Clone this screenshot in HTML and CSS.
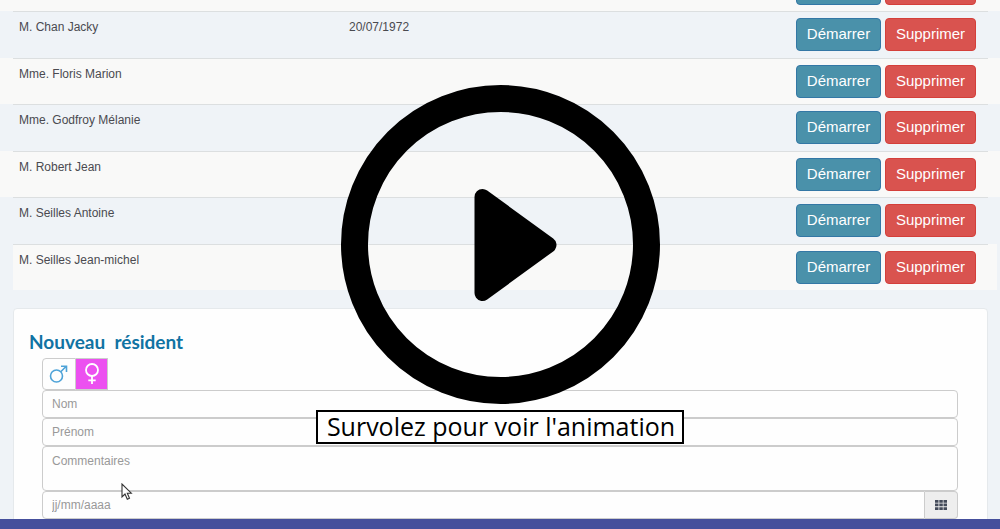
FILE: index.html
```html
<!DOCTYPE html>
<html lang="fr">
<head>
<meta charset="utf-8">
<meta name="viewport" content="width=device-width, initial-scale=1">
<title>Résidents</title>
<link rel="stylesheet" href="styles.css">
</head>
<body>
<main class="page">
  <table class="residents">
    <tbody>
      <tr><td class="name"></td><td class="birth"></td><td class="actions"><button class="btn start" aria-label="Démarrer"></button><button class="btn delete" aria-label="Supprimer"></button></td></tr>
      <tr><td class="name">M. Chan Jacky</td><td class="birth">20/07/1972</td><td class="actions"><button class="btn start">Démarrer</button><button class="btn delete">Supprimer</button></td></tr>
      <tr><td class="name">Mme. Floris Marion</td><td class="birth"></td><td class="actions"><button class="btn start">Démarrer</button><button class="btn delete">Supprimer</button></td></tr>
      <tr><td class="name">Mme. Godfroy Mélanie</td><td class="birth"></td><td class="actions"><button class="btn start">Démarrer</button><button class="btn delete">Supprimer</button></td></tr>
      <tr><td class="name">M. Robert Jean</td><td class="birth"></td><td class="actions"><button class="btn start">Démarrer</button><button class="btn delete">Supprimer</button></td></tr>
      <tr><td class="name">M. Seilles Antoine</td><td class="birth"></td><td class="actions"><button class="btn start">Démarrer</button><button class="btn delete">Supprimer</button></td></tr>
      <tr><td class="name">M. Seilles Jean-michel</td><td class="birth"></td><td class="actions"><button class="btn start">Démarrer</button><button class="btn delete">Supprimer</button></td></tr>
    </tbody>
  </table>

  <section class="panel">
    <h2 class="title">Nouveau&nbsp; résident</h2>
    <form class="form">
      <div class="gender">
        <button type="button" class="sex male" aria-label="Homme">
          <svg width="20" height="20" viewBox="0 0 20 20" fill="none" stroke="currentColor" stroke-width="1.6"><circle cx="7.500" cy="12" r="6"/><path d="M11.800 7.700 17.200 2.300M12 2.300H17.500V8"/></svg>
        </button>
        <button type="button" class="sex female" aria-label="Femme">
          <svg width="20" height="22" viewBox="0 0 20 22" fill="none" stroke="currentColor" stroke-width="1.8"><circle cx="10" cy="7" r="6"/><path d="M10 13v8M6.300 17.300h7.400"/></svg>
        </button>
      </div>
      <input class="field" type="text" placeholder="Nom" aria-label="Nom">
      <input class="field" type="text" placeholder="Prénom" aria-label="Prénom">
      <textarea class="field notes" placeholder="Commentaires" aria-label="Commentaires"></textarea>
      <div class="date">
        <input class="field" type="text" placeholder="jj/mm/aaaa" aria-label="Date de naissance">
        <button type="button" class="pick" aria-label="Calendrier">
          <svg width="12" height="10" viewBox="0 0 12 10" fill="currentColor"><path d="M0 0h3.500v2.700H0zM4.300 0h3.500v2.700h-3.500zM8.500 0H12v2.700H8.500zM0 3.600h3.500v2.700H0zM4.300 3.600h3.500v2.700h-3.500zM8.500 3.600H12v2.700H8.500zM0 7.200h3.500v2.700H0zM4.300 7.200h3.500v2.700h-3.500zM8.500 7.200H12v2.700H8.500z"/></svg>
        </button>
      </div>
    </form>
  </section>
  <svg class="cursor" width="12" height="18" viewBox="0 0 12 18"><path d="M1 1v13l3-3 2.300 5.300 2.200-1L6.300 10.200H10.300z" fill="#fff" stroke="#333" stroke-width="1.100"/></svg>
</main>
<footer class="bar"></footer>
<div class="overlay">
  <svg class="play" width="320" height="320" viewBox="0 0 320 320"><circle cx="160.500" cy="159.500" r="146" fill="none" stroke="#000" stroke-width="27"/><path d="M142.500 112 208.500 160 142.500 208z" stroke="#000" stroke-width="16" stroke-linejoin="round"/></svg>
  <p class="hint">Survolez pour voir l'animation</p>
</div>
</body>
</html>
```

FILE: styles.css
```css
* { box-sizing: border-box; }

body {
  margin: 0;
  height: 100vh;
  display: flex;
  flex-direction: column;
  overflow: hidden;
  position: relative;
  background: #eff3f7;
  color: #4a4a50;
  font: 12px/16px "Liberation Sans", Arial, sans-serif;
}

.page {
  flex: 1;
  min-height: 0;
  overflow: hidden;
  padding: 0 12px 0 13px;
}

/* The list is scrolled: only the foot of its first row shows. */
.residents {
  width: 100%;
  margin-top: -35px;
  border-collapse: separate;
  border-spacing: 0;
  table-layout: fixed;
}

.residents td {
  border-top: 1px solid #dcdfe0;
  padding: 7px 6px 6px;
  vertical-align: top;
}

/* Light stripes bleed to the edges of the page. */
.residents tr:nth-child(odd) {
  background: #f9f9f8;
  box-shadow: -13px 0 #f9f9f8, 12px 0 #f9f9f8;
}
.residents tr:last-child { box-shadow: 9px 0 #f9f9f8; }

.name { width: 330px; }
.residents .actions {
  display: flex;
  justify-content: flex-end;
  gap: 4px;
  padding: 6px 12px 7px 0;
}
.residents tr:nth-child(odd) .actions { padding-bottom: 6px; }

.btn {
  width: 91px;
  height: 33px;
  padding: 0 0 1px;
  border: 1px solid;
  border-radius: 4px;
  color: #fff;
  font: 15px/20px "Liberation Sans", Arial, sans-serif;
}

.start { width: 85px; background: #4a91aa; border-color: #3377a5; }
.delete { background: #d9534f; border-color: #d43f3a; }

.panel {
  margin-top: 18px;
  padding: 21px 29px 0 28px;
  min-height: 260px;
  background: #fefefe;
  border: 1px solid #e5e9ec;
  border-radius: 4px;
}

.title {
  margin: 0 0 4px -13px;
  color: #1073a3;
  font: 700 19px/24px Lato, sans-serif;
}

.form { display: flex; flex-direction: column; }
.gender { display: flex; height: 32px; }

.sex {
  display: grid;
  place-items: center;
  width: 34px;
  padding: 0;
  border: 1px solid #ccc;
  background: #fefefe;
}

.male { color: #4ea3d8; border-radius: 4px 0 0 4px; }
.female { width: 32px; background: #ec50f0; color: #fff; border-left: 0; }

.field {
  display: block;
  width: 100%;
  height: 28px;
  margin: 0;
  padding: 4px 9px;
  border: 1px solid #ccc;
  border-radius: 4px;
  background: #fefefe;
  font: 12px/18px "Liberation Sans", Arial, sans-serif;
  resize: none;
}

.field::placeholder { color: #999; opacity: 1; }
.notes { height: 45px; padding-top: 5px; }
.date { display: flex; }
.date .field { flex: 1; border-radius: 4px 0 0 4px; }

.pick {
  display: grid;
  place-items: center;
  width: 33px;
  height: 28px;
  padding: 0;
  border: 1px solid #ccc;
  border-left: 0;
  border-radius: 0 4px 4px 0;
  background: #eee;
  color: #444b5a;
}

.bar { flex: 0 0 10px; background: #454f9c; }

.cursor { position: absolute; left: 121px; top: 483px; }

.overlay {
  position: absolute;
  inset: 85px 0 auto;
  display: flex;
  flex-direction: column;
  align-items: center;
  pointer-events: none;
}

.play { display: block; }

.hint {
  margin: 5px 0 0;
  padding: 0 7px 2px 9px;
  border: 2px solid #000;
  background: #fff;
  color: #000;
  font: 25px/28px "Open Sans", sans-serif;
}
```
